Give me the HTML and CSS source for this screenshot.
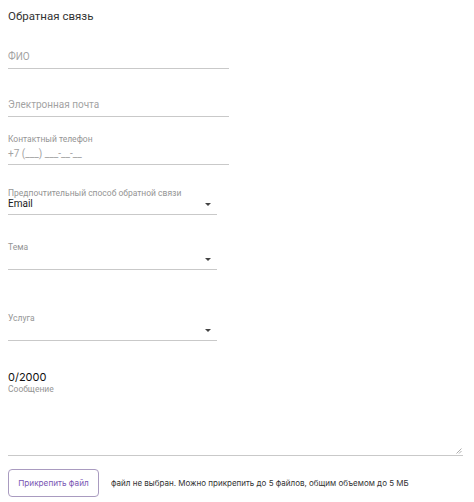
FILE: index.html
```html
<!DOCTYPE html>
<html lang="ru">
<head>
<meta charset="utf-8">
<link rel="stylesheet" href="styles.css">
</head>
<body>
<form class="form">
  <h1 class="title">Обратная связь</h1>

  <div class="field field-name">
    <div class="value placeholder">ФИО</div>
  </div>

  <div class="field field-email">
    <div class="value placeholder">Электронная почта</div>
  </div>

  <div class="field field-phone">
    <div class="label">Контактный телефон</div>
    <div class="value placeholder">+7 (___) ___-__-__</div>
  </div>

  <div class="field select select-contact">
    <div class="label">Предпочтительный способ обратной связи</div>
    <div class="select-row">
      <span class="value">Email</span>
      <span class="arrow"></span>
    </div>
  </div>

  <div class="field select select-topic">
    <div class="label">Тема</div>
    <div class="select-row empty">
      <span class="value"></span>
      <span class="arrow"></span>
    </div>
  </div>

  <div class="field select select-service">
    <div class="label">Услуга</div>
    <div class="select-row empty">
      <span class="value"></span>
      <span class="arrow"></span>
    </div>
  </div>

  <div class="message">
    <div class="counter">0/2000</div>
    <div class="label">Сообщение</div>
    <div class="textarea">
      <svg class="grip" width="6" height="6" viewBox="0 0 6 6"><path d="M0.5 5.5 L5.5 0.5 M3 5.5 L5.5 3" stroke="#999" stroke-width="0.8" fill="none"/></svg>
    </div>
  </div>

  <div class="attach">
    <span class="btn">Прикрепить файл</span>
    <span class="attach-note">файл не выбран. Можно прикрепить до 5 файлов, общим объемом до 5 МБ</span>
  </div>
</form>
</body>
</html>
```

FILE: styles.css
```css
* { box-sizing: border-box; }
html, body { margin: 0; background: #fff; }
body {
  font-family: Roboto, "Noto Sans", sans-serif;
  color: #222;
  padding: 8px;
}
.form { display: flex; flex-direction: column; }
.title {
  font-size: 11.5px;
  font-weight: 400;
  line-height: 16px;
  margin: 0;
  color: #333;
}
.field {
  width: 221px;
  border-bottom: 1px solid #c9c9c9;
}
.value {
  font-size: 10px;
  line-height: 14px;
  padding-bottom: 4px;
  color: #222;
}
.placeholder { color: #a3a3a3; }
.label {
  font-size: 8.5px;
  line-height: 10px;
  color: #959595;
}
.field-name { margin-top: 26px; }
.field-email { margin-top: 29px; }
.field-phone { margin-top: 17px; }
.field-phone .label { margin-bottom: 3px; }
.field-phone .value { padding-bottom: 3px; }
.select { width: 209px; }
.select-contact { margin-top: 23px; }
.select-topic { margin-top: 27px; }
.select-service { margin-top: 43px; }
.select-row {
  display: flex;
  justify-content: space-between;
  align-items: center;
  height: 12px;
  margin-top: 0;
  margin-bottom: 4px;
}
.select-row .value { padding-bottom: 0; line-height: 12px; color: #1a1a1a; }
.select-row.empty { margin-top: 1px; }
.arrow {
  width: 0;
  height: 0;
  border-left: 3.5px solid transparent;
  border-right: 3.5px solid transparent;
  border-top: 3.5px solid #444;
  margin-right: 6px;
}
.message { margin-top: 29px; }
.counter {
  font-family: Inter, "Noto Sans", sans-serif;
  font-size: 11px;
  line-height: 14px;
  color: #111;
}
.textarea {
  position: relative;
  width: 455px;
  height: 62px;
  border-bottom: 1px solid #c9c9c9;
}
.grip { position: absolute; right: 1px; bottom: 1px; }
.attach {
  margin-top: 13px;
  display: flex;
  align-items: center;
  gap: 12px;
}
.btn {
  display: inline-flex;
  align-items: center;
  justify-content: center;
  width: 91px;
  height: 28px;
  border: 1px solid #a99bc0;
  border-radius: 4px;
  font-family: Inter, "Noto Sans", sans-serif;
  font-size: 8.2px;
  color: #7a55b3;
}
.attach-note {
  font-family: Inter, "Noto Sans", sans-serif;
  font-size: 8px;
  color: #333;
}
```
